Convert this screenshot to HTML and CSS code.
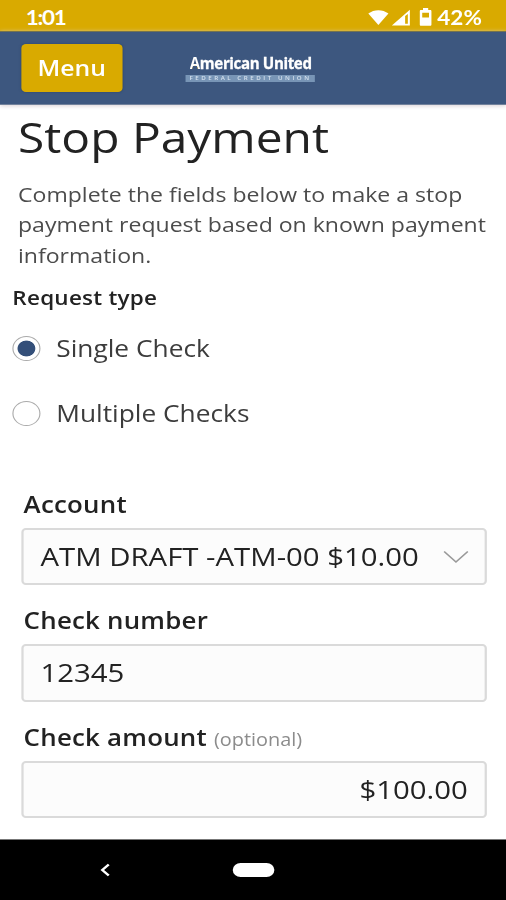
FILE: index.html
```html
<!DOCTYPE html>
<html lang="en">
<head>
<meta charset="utf-8">
<title>Stop Payment</title>
<link rel="stylesheet" href="styles.css">
</head>
<body>
<div class="screen">
  <div class="status">
    <span class="clock">1:01</span>
    <div class="indicators">
      <svg class="wifi" width="19" height="17" viewBox="0 0 20 17"><path d="M0.600 4.400C6-.4 14-.4 19.400 4.400L10 16.400z" fill="#fff"/></svg>
      <svg class="signal" width="17" height="17" viewBox="0 0 17 17"><path fill-rule="evenodd" d="M16.500.8V16.500H.5zM12.300 7v7.800h2.400V5z" fill="#fff"/></svg>
      <svg class="battery" width="11" height="18" viewBox="0 0 11 18"><path fill-rule="evenodd" d="M3.200 0h4.600v2h1.700c.8 0 1.300.5 1.300 1.300v13.200c0 .8-.5 1.300-1.300 1.300h-8c-.8 0-1.300-.5-1.300-1.300V3.300C.2 2.500.7 2 1.500 2h1.700zM2.500 4.800V9.500h6V4.800z" fill="#fff"/></svg>
      <span class="percent">42%</span>
    </div>
  </div>
  <header class="header">
    <button class="menu">Menu</button>
    <div class="logo">
      <span class="brand"><span class="initial">A</span>merican United</span>
      <span class="tagline">FEDERAL CREDIT UNION</span>
    </div>
  </header>
  <main class="content">
    <h1 class="title">Stop Payment</h1>
    <p class="intro">Complete the fields below to make a stop<br>payment request based on known payment<br>information.</p>
    <div class="group-label">Request type</div>
    <label class="option"><span class="radio checked"></span><span>Single Check</span></label>
    <label class="option"><span class="radio"></span><span>Multiple Checks</span></label>
    <div class="fields">
      <div class="field">
        <div class="label">Account</div>
        <div class="box select"><span>ATM DRAFT -ATM-00 $10.00</span>
          <svg class="chevron" width="23" height="14" viewBox="0 0 23 14"><path d="M1 1.500L11.500 12 22 1.500" fill="none" stroke="#999" stroke-width="1.500"/></svg>
        </div>
      </div>
      <div class="field">
        <div class="label">Check number</div>
        <div class="box number">12345</div>
      </div>
      <div class="field">
        <div class="label amount-label">Check amount <span class="optional">(optional)</span></div>
        <div class="box amount">$100.00</div>
      </div>
    </div>
  </main>
  <nav class="nav">
    <svg class="back" width="9" height="14" viewBox="0 0 9 14"><path d="M7.700 1.500L2 7l5.700 5.500" fill="none" stroke="#fff" stroke-width="2.300"/></svg>
    <span class="home"></span>
  </nav>
</div>
</body>
</html>
```
FILE: styles.css
```css
* { box-sizing: border-box; }
html, body { margin: 0; height: 900px; overflow: hidden; background: #fff; }
/* 450px layout widened to fill a 506px window */
.screen {
  width: 450px;
  height: 900px;
  display: flex;
  flex-direction: column;
  transform: scaleX(1.12444);
  transform-origin: 0 0;
  font-family: "Open Sans", "Noto Sans", sans-serif;
  font-weight: 400;
  color: #222;
}
.status {
  height: 31px;
  background: #d9aa00;
  color: #fff;
  display: flex;
  justify-content: space-between;
  align-items: center;
  padding: 3px 21.500px 0 23px;
  font-family: Lato, "Open Sans", sans-serif;
  font-weight: 700;
  font-size: 20px;
  line-height: 28px;
}
.clock { letter-spacing: -1.200px; }
.indicators { display: flex; align-items: center; }
.wifi { margin-right: 2px; }
.signal { margin-right: 8px; }
.battery { margin-right: 5px; }
.header {
  position: relative;
  height: 74px;
  background: #3d577f;
  border-top: 1px solid #75734f;
  border-bottom: 1px solid #71819b;
  box-shadow: 0 1px 4px #d8d0d4;
  display: flex;
  align-items: flex-start;
}
.menu {
  width: 90px;
  height: 48px;
  margin: 12px 0 0 19.300px;
  padding: 0 1px 2px 0;
  border: 0;
  border-radius: 4px;
  background: #d9aa00;
  box-shadow: 0 0 2px #2c456b;
  color: #fff;
  font-family: inherit;
  font-size: 22px;
  font-weight: 600;
  line-height: 45px;
}
.logo { width: 115px; margin: 20px 0 0 56px; display: flex; flex-direction: column; align-items: center; }
.brand { font-size: 16px; line-height: 23px; font-weight: 700; color: #fff; letter-spacing: -0.400px; white-space: nowrap; transform: translateX(0.500px) scaleX(0.84); -webkit-text-stroke: 0.300px #fff; }
.initial { background: radial-gradient(circle at 50% 76%, #e5b52c 0 2.500px, #fff 3.500px); background-clip: text; -webkit-background-clip: text; color: transparent; -webkit-text-stroke: 0; }
.tagline {
  width: 115px;
  height: 7px;
  background: #7895b6;
  color: #d5e1ee;
  font-size: 5.500px;
  line-height: 7px;
  font-weight: 600;
  letter-spacing: 2.250px;
  text-align: center;
  white-space: nowrap;
}
.content { height: 734px; padding-top: 1px; }
.title { margin: 0 0 13px 16px; font-size: 42.600px; line-height: 60px; font-weight: 400; }
.intro { margin: 0 0 14px 16px; font-size: 20.500px; line-height: 30.330px; color: #4c4c4c; white-space: nowrap; }
.group-label { margin: 0 0 19.500px 11px; font-size: 20px; line-height: 28px; font-weight: 600; letter-spacing: 0.200px; }
.option { height: 34px; margin: 0 0 31px 11px; display: flex; align-items: center; gap: 14px; font-size: 23.400px; line-height: 34px; color: #3c3c3c; }
.radio { width: 25px; height: 25px; border: 1px solid #aaa; border-radius: 50%; background: #fff; }
.checked { background: radial-gradient(circle, #344f79 0 7.500px, #fff 8.300px); }
.fields { margin: 58.500px 17px 0 19px; }
.field { height: 116.300px; }
.label { height: 39px; padding-left: 2px; font-size: 23px; line-height: 30px; font-weight: 600; letter-spacing: 0.200px; }
.optional { font-size: 17.700px; font-weight: 400; color: #8c8c8c; letter-spacing: 0; }
.box { height: 57.300px; padding: 0 14px 0 15px; border: 2px solid #dadada; border-radius: 4px; background: #fcfcfc; font-size: 26.100px; line-height: 53px; white-space: nowrap; }
.select { display: flex; justify-content: space-between; align-items: center; }
.amount { text-align: right; padding-right: 15px; }
.nav {
  height: 61px;
  background: #000;
  border-top: 1px solid #777;
  display: grid;
  grid-template-columns: 90px 117px 37px;
  align-items: center;
}
.back { grid-column: 1; margin-left: 89px; }
.home { grid-column: 3; width: 37px; height: 14px; border-radius: 7px; background: #fff; }
```
